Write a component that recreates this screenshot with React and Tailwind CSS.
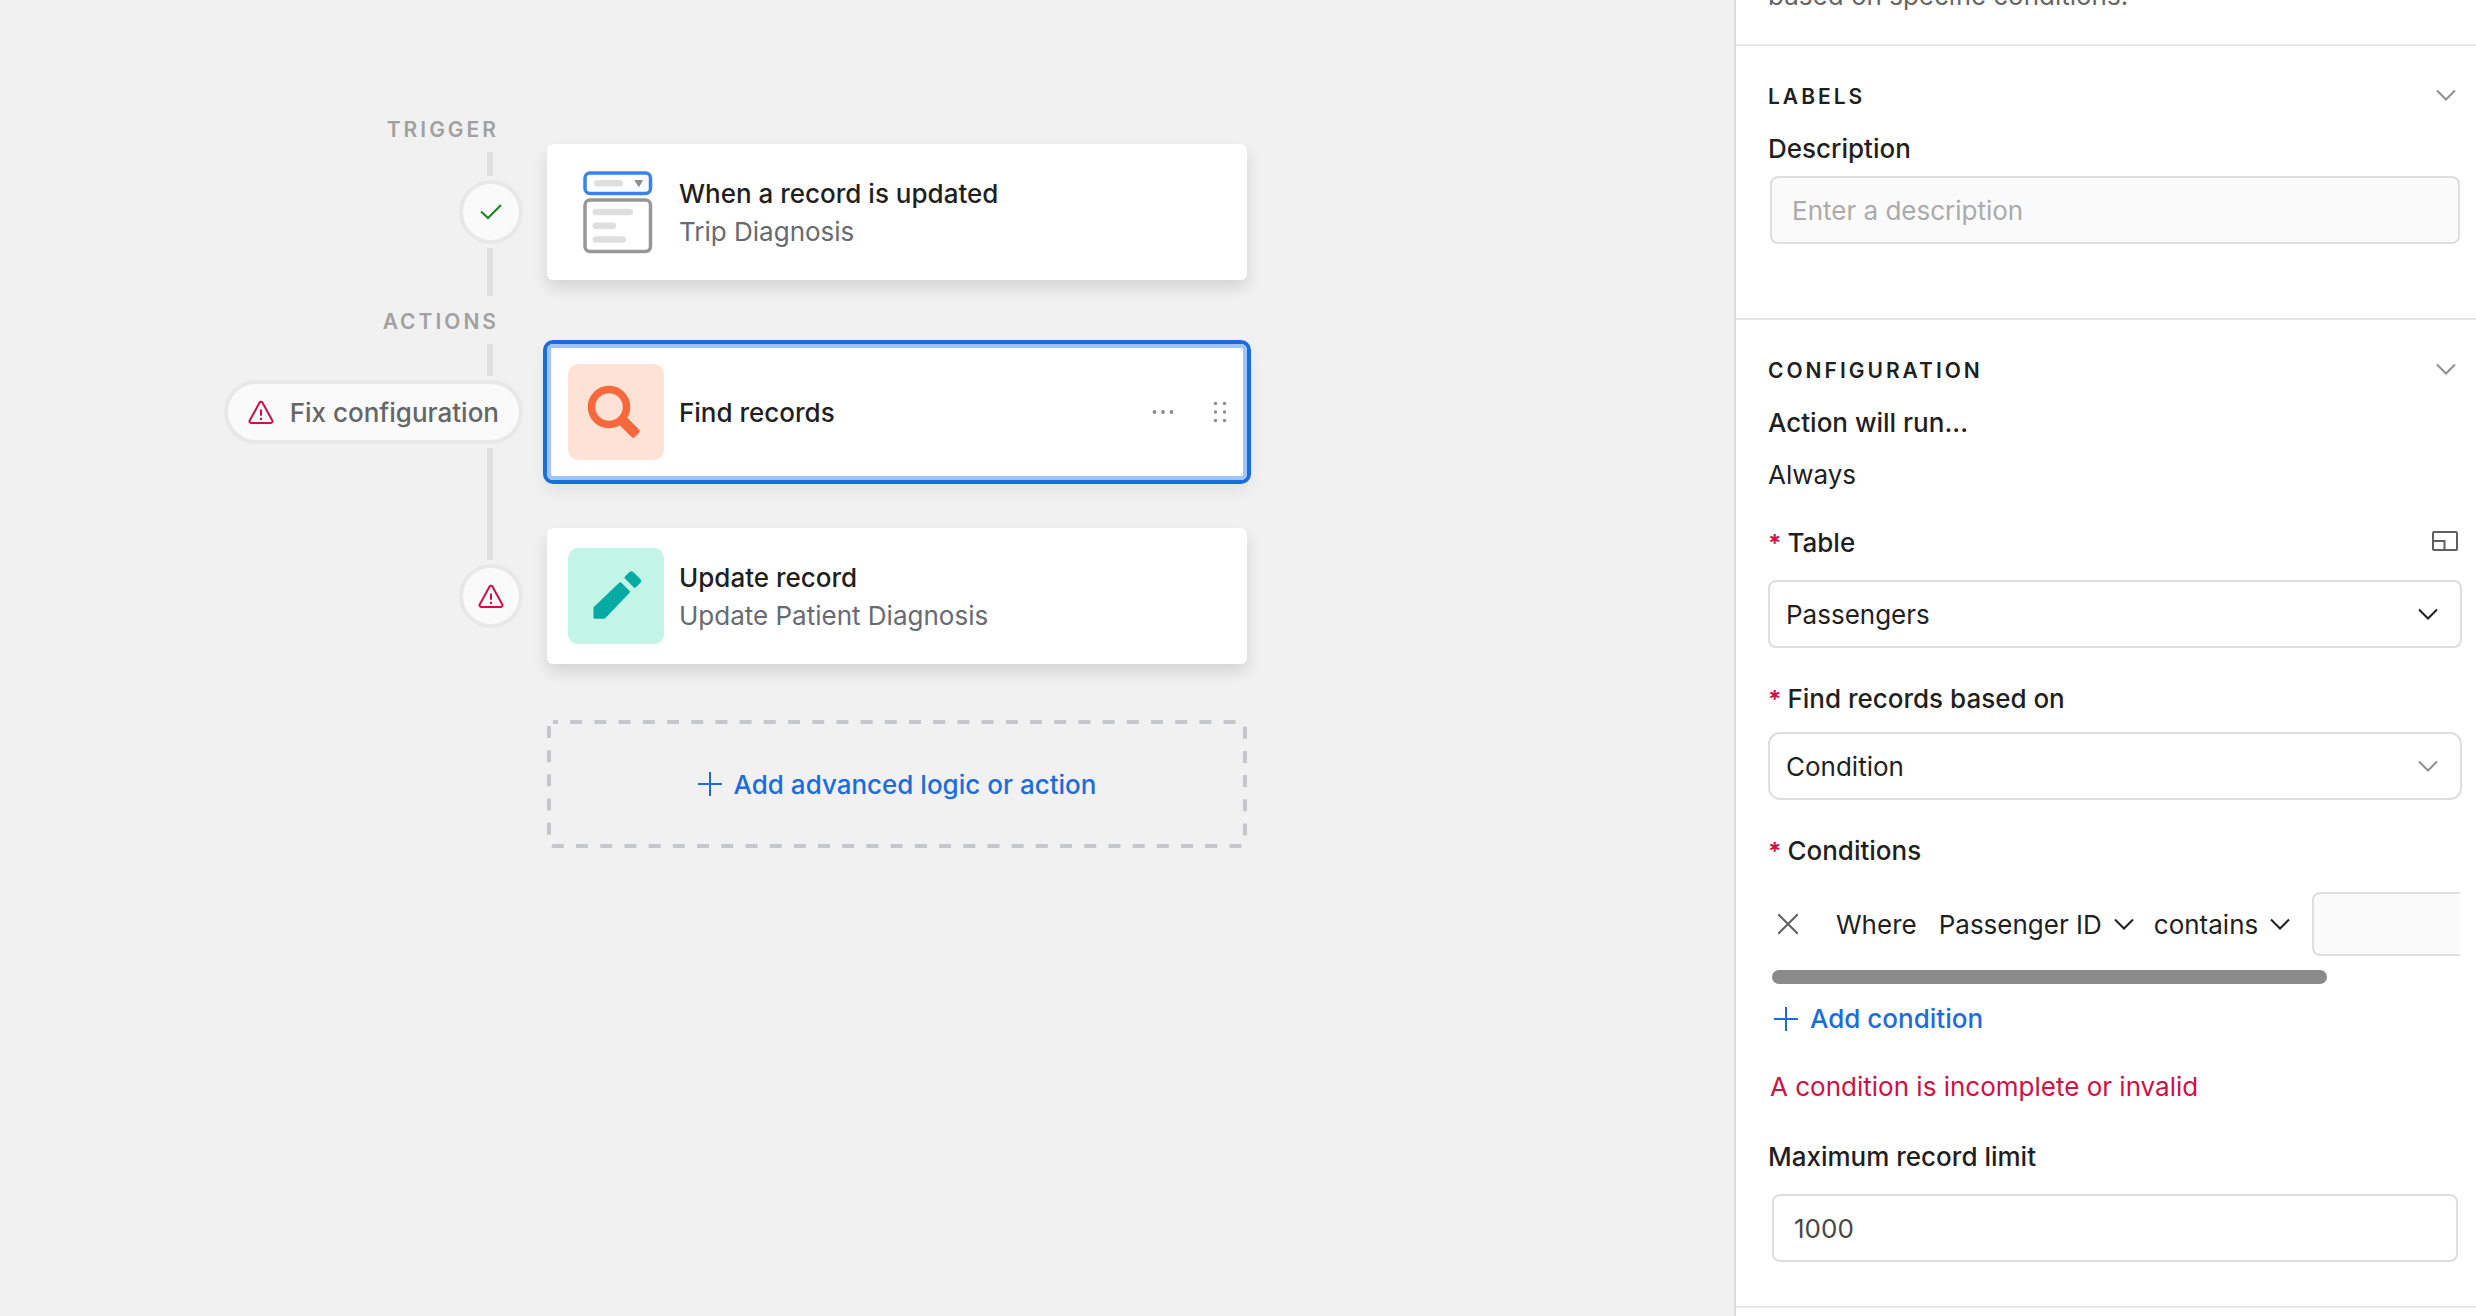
import React, { useState } from "react";

const ChevronDown = ({ className }) => (
  <svg viewBox="0 0 20 12" fill="none" stroke="currentColor" strokeWidth="2" className={`h-3 w-5 shrink-0 ${className}`}>
    <path d="M1 1.5 10 10.5 19 1.5" />
  </svg>
);

const PlusIcon = () => (
  <svg viewBox="0 0 24 24" fill="none" stroke="currentColor" strokeWidth="2" className="h-6 w-6 shrink-0">
    <path d="M12 0v24M0 12h24" />
  </svg>
);

const AlertIcon = () => (
  <svg viewBox="0 0 26 24" fill="none" stroke="currentColor" strokeWidth="2" className="h-6 w-[26px] shrink-0 text-[#d20f45]">
    <path d="M11.6 2.6a1.6 1.6 0 0 1 2.8 0l9.9 17.9a1.6 1.6 0 0 1-1.4 2.4H3.1a1.6 1.6 0 0 1-1.4-2.4z" strokeLinejoin="round" />
    <path d="M13 9.5v6.2M13 17.8v2.2" />
  </svg>
);

const CheckIcon = () => (
  <svg viewBox="0 0 22 16" fill="none" stroke="currentColor" strokeWidth="2" className="h-4 w-[22px] text-[#178527]">
    <path d="M1 7.5 8 14 21 1" />
  </svg>
);

const RecordIcon = () => (
  <svg viewBox="0 0 96 96" fill="none" className="h-24 w-24 shrink-0">
    <rect x="17" y="9" width="65.5" height="20.5" rx="5" stroke="#3b82ee" strokeWidth="3.5" />
    <rect x="26" y="16" width="29" height="6.5" rx="3.2" fill="#dfdfdf" />
    <path d="M67 16.5h7.5l-3.7 6z" fill="#8f8f8f" stroke="#8f8f8f" strokeLinejoin="round" />
    <rect x="17" y="36" width="65.5" height="51.5" rx="5" stroke="#979797" strokeWidth="3.5" />
    <rect x="24.5" y="44.7" width="40.5" height="6.6" rx="3.3" fill="#dfdfdf" />
    <rect x="24.5" y="58.4" width="23.5" height="6.6" rx="3.3" fill="#dfdfdf" />
    <rect x="24.5" y="72.2" width="33.5" height="6.6" rx="3.3" fill="#dfdfdf" />
  </svg>
);

const SearchIcon = () => (
  <svg viewBox="0 0 96 96" fill="none" className="h-24 w-24 shrink-0 rounded-[10px] bg-[#fee2d6]">
    <circle cx="41" cy="43" r="17.5" stroke="#f7683d" strokeWidth="7.5" />
    <path d="m54 56 4 4" stroke="#f7683d" strokeWidth="10" />
    <path d="M58.5 53.5 70.5 65.5q1.7 1.7 0 3.4l-3.6 3.6q-1.7 1.7-3.4 0L51.5 60.5z" fill="#f7683d" stroke="#f7683d" strokeLinejoin="round" />
  </svg>
);

const PencilIcon = () => (
  <svg viewBox="0 0 96 96" className="h-24 w-24 shrink-0 rounded-[10px] bg-[#c3f5e7]">
    <g fill="#08aaa4" stroke="#08aaa4" strokeWidth="2.5" strokeLinejoin="round">
      <path d="M26.7 60 52.3 35.5 60.7 44 36.3 69.5H26.7z" />
      <path d="M57.8 29.7 62 25.2q1.3-1.2 2.6 0l6.6 6.5q1.2 1.3 0 2.6L66.7 38.6z" />
    </g>
  </svg>
);

const ExpandIcon = () => (
  <svg viewBox="0 0 26 20" fill="none" stroke="currentColor" strokeWidth="2" className="h-5 w-[26px] text-[#5f5f5f]">
    <rect x="1" y="1" width="24" height="18" rx="1" />
    <path d="M1 10h11.5v9" />
  </svg>
);

const Connector = ({ className }) => <div className={`my-1 mr-[30px] w-1.5 bg-[#e0e0e0] ${className}`} />;

const StageLabel = ({ children }) => (
  <h2 className="mt-1.5 mr-6 mb-0.5 text-[21px] leading-8 font-semibold tracking-[3px] text-[#a1a1a1] uppercase">
    {children}
  </h2>
);

const StatusDot = ({ children }) => (
  <div className="flex h-16 w-16 items-center justify-center rounded-full border-4 border-[#e8e8e8] bg-[#fafafa]">
    {children}
  </div>
);

const StepCard = ({ icon, title, subtitle, selected, children }) => (
  <article
    className={`flex h-[136px] items-center gap-[15px] rounded-md bg-white pr-5 pl-[21px] ${
      selected
        ? "shadow-[inset_0_0_0_4px_#9ec5fb,0_0_0_4px_#1b6ddb,0_8px_16px_4px_rgba(0,0,0,0.06)]"
        : "shadow-[0_8px_16px_rgba(0,0,0,0.12)]"
    }`}
  >
    {icon}
    <div className="min-w-0 flex-1 pt-0.5 leading-[38px]">
      <h3 className="font-medium text-[#1f1f1f]">{title}</h3>
      {subtitle && <p className="text-[#666a73]">{subtitle}</p>}
    </div>
    {children}
  </article>
);

const SectionHeader = ({ title, open, onToggle }) => (
  <button type="button" aria-expanded={open} onClick={onToggle} className="flex w-full items-center justify-between pr-1.5">
    <span className="text-[21px] leading-8 font-semibold tracking-[3px] text-[#1f1f1f] uppercase">{title}</span>
    <ChevronDown className="mb-1 text-[#8f8f8f]" />
  </button>
);

const Required = () => <span aria-hidden="true" className="mr-1.5 text-2xl leading-none font-bold text-[#d20f45]">*</span>;

const Select = ({ id, value, options, className, chevronClass }) => (
  <div className="grid items-center">
    <select
      id={id}
      defaultValue={value}
      className={`col-start-1 row-start-1 h-[68px] w-full appearance-none border-2 border-[#dedede] bg-white px-4 pt-0.5 ${className}`}
    >
      {options.map((option) => (
        <option key={option}>{option}</option>
      ))}
    </select>
    <ChevronDown className={`pointer-events-none col-start-1 row-start-1 mr-6 justify-self-end ${chevronClass}`} />
  </div>
);

const InlineSelect = ({ label, value, options }) => (
  <div className="flex shrink-0 items-center">
    <select aria-label={label} defaultValue={value} className="field-sizing-content -mr-5 appearance-none bg-transparent pt-0.5 pr-8">
      {options.map((option) => (
        <option key={option}>{option}</option>
      ))}
    </select>
    <ChevronDown className="pointer-events-none" />
  </div>
);

const Canvas = () => (
  <main className="flex min-w-0 flex-1 items-start gap-6 bg-[#f1f1f1] pr-8 pl-[223px]">
    <div className="flex w-[300px] shrink-0 flex-col items-end pt-27">
      <StageLabel>Trigger</StageLabel>
      <Connector className="h-6" />
      <StatusDot>
        <CheckIcon />
      </StatusDot>
      <Connector className="h-12" />
      <StageLabel>Actions</StageLabel>
      <Connector className="h-8" />
      <button
        type="button"
        className="flex h-16 items-center gap-4 rounded-full border-4 border-[#e8e8e8] bg-[#fafafa] px-5 font-medium whitespace-nowrap text-[#666666]"
      >
        <AlertIcon />
        Fix configuration
      </button>
      <Connector className="h-28" />
      <StatusDot>
        <AlertIcon />
      </StatusDot>
    </div>

    <div className="w-full max-w-[700px] pt-36">
      <StepCard icon={<RecordIcon />} title="When a record is updated" subtitle="Trip Diagnosis" />
      <div className="mt-16 mb-12">
        <StepCard icon={<SearchIcon />} title="Find records" selected>
          <button type="button" aria-label="More options" className="mr-6 text-[#8c8c8c]">
            <svg viewBox="0 0 22 4" fill="currentColor" className="h-1 w-[22px]">
              <circle cx="2.5" cy="2" r="1.9" />
              <circle cx="11" cy="2" r="1.9" />
              <circle cx="19.5" cy="2" r="1.9" />
            </svg>
          </button>
          <button type="button" aria-label="Drag to reorder" className="text-[#8c8c8c]">
            <svg viewBox="0 0 14 22" fill="currentColor" className="h-[22px] w-3.5">
              {[2.5, 11, 19.5].map((y) => (
                <g key={y}>
                  <circle cx="2.5" cy={y} r="1.7" />
                  <circle cx="11.5" cy={y} r="1.7" />
                </g>
              ))}
            </svg>
          </button>
        </StepCard>
      </div>
      <StepCard icon={<PencilIcon />} title="Update record" subtitle="Update Patient Diagnosis" />
      <button
        type="button"
        className="relative mt-14 flex h-32 w-full items-center justify-center gap-3 font-medium text-[#1b6ddb]"
      >
        <svg className="absolute inset-0 h-full w-full" fill="none">
          <rect
            x="2"
            y="2"
            rx="4"
            className="h-[calc(100%-4px)] w-[calc(100%-4px)]"
            stroke="#c5c7cb"
            strokeWidth="4"
            strokeDasharray="12 12.2"
            strokeDashoffset="7"
          />
        </svg>
        <PlusIcon />
        Add advanced logic or action
      </button>
    </div>
  </main>
);

const Sidebar = () => {
  const [labelsOpen, setLabelsOpen] = useState(true);
  const [configOpen, setConfigOpen] = useState(true);
  const [description, setDescription] = useState("");
  const [limit, setLimit] = useState("1000");

  return (
    <aside className="w-[742px] shrink-0 border-l-2 border-[#dcdcdc] bg-white leading-9 text-[#1f1f1f]">
      <header className="flex h-11 flex-col justify-end overflow-hidden px-8 pb-[30px] text-[#666666]">
        <p>based on specific conditions.</p>
      </header>

      {/* Labels */}
      <section className="border-t-2 border-[#e6e6e6] pt-[35px] pr-3.5 pb-[74px] pl-8">
        <SectionHeader title="Labels" open={labelsOpen} onToggle={() => setLabelsOpen(!labelsOpen)} />
        {labelsOpen && (
          <>
            <label htmlFor="description" className="mt-[18px] block font-medium">
              Description
            </label>
            <div className="mt-[9px] px-0.5">
              <input
                id="description"
                type="text"
                value={description}
                onChange={(e) => setDescription(e.target.value)}
                placeholder="Enter a description"
                className="block h-[68px] w-full rounded-lg border-2 border-[#dedede] bg-[#fafafa] px-5 placeholder:text-[#ababab]"
              />
            </div>
          </>
        )}
      </section>

      {/* Configuration */}
      <section className="border-y-2 border-[#e6e6e6] pt-[35px] pr-3.5 pb-11 pl-8">
        <SectionHeader title="Configuration" open={configOpen} onToggle={() => setConfigOpen(!configOpen)} />
        {configOpen && (
          <>
            <h4 className="mt-[18px] font-medium">Action will run...</h4>
            <p className="mt-4">Always</p>

            <div className="mt-8 mb-[19px] flex items-center justify-between pr-1">
              <label htmlFor="table" className="font-medium">
                <Required />
                Table
              </label>
              <button type="button" aria-label="Open table" className="mb-1">
                <ExpandIcon />
              </button>
            </div>
            <Select
              id="table"
              value="Passengers"
              options={["Passengers", "Patients", "Trips"]}
              className="rounded-lg"
              chevronClass="text-[#1f1f1f]"
            />

            <label htmlFor="based-on" className="mt-[33px] mb-[15px] block font-medium">
              <Required />
              Find records based on
            </label>
            <Select
              id="based-on"
              value="Condition"
              options={["Condition", "View"]}
              className="rounded-xl"
              chevronClass="text-[#8f8f8f]"
            />

            <h4 className="mt-[33px] font-medium">
              <Required />
              Conditions
            </h4>
            <div className="mt-[23px] mr-0.5 flex items-center overflow-hidden pl-2.5">
              <button type="button" aria-label="Remove condition" className="shrink-0 text-[#5f5f5f]">
                <svg viewBox="0 0 20 20" fill="none" stroke="currentColor" strokeWidth="2" className="h-5 w-5">
                  <path d="m0 0 20 20M20 0 0 20" />
                </svg>
              </button>
              <span className="mr-[22px] ml-[38px] shrink-0 pt-0.5">Where</span>
              <InlineSelect label="Field" value="Passenger ID" options={["Passenger ID", "Name"]} />
              <div className="w-5 shrink-0" />
              <InlineSelect label="Operator" value="contains" options={["contains", "is"]} />
              <input
                type="text"
                aria-label="Condition value"
                className="ml-[22px] h-16 w-80 shrink-0 rounded-lg border-2 border-[#dedede] bg-[#fafafa] px-5"
              />
            </div>
            <div className="mt-3.5 ml-1 h-3.5 w-4/5 rounded-full bg-[#8a8a8a]" />

            <button type="button" className="mt-[17px] ml-1.5 flex items-center gap-3 font-medium text-[#1b6ddb]">
              <PlusIcon />
              Add condition
            </button>
            <p role="alert" className="mt-8 ml-0.5 text-[#d20f45]">
              A condition is incomplete or invalid
            </p>

            <label htmlFor="limit" className="mt-[34px] block font-medium">
              Maximum record limit
            </label>
            <div className="mt-[19px] px-1">
              <input
                id="limit"
                type="text"
                inputMode="numeric"
                value={limit}
                onChange={(e) => setLimit(e.target.value)}
                className="block h-[68px] w-full rounded-lg border-2 border-[#dedede] bg-white px-5 text-[#474747]"
              />
            </div>
          </>
        )}
      </section>
    </aside>
  );
};

const App = () => {
  return (
    <div className="flex min-h-screen bg-[#f1f1f1] font-['Inter',sans-serif] text-[26px]">
      <Canvas />
      <Sidebar />
    </div>
  );
};

export default App;
